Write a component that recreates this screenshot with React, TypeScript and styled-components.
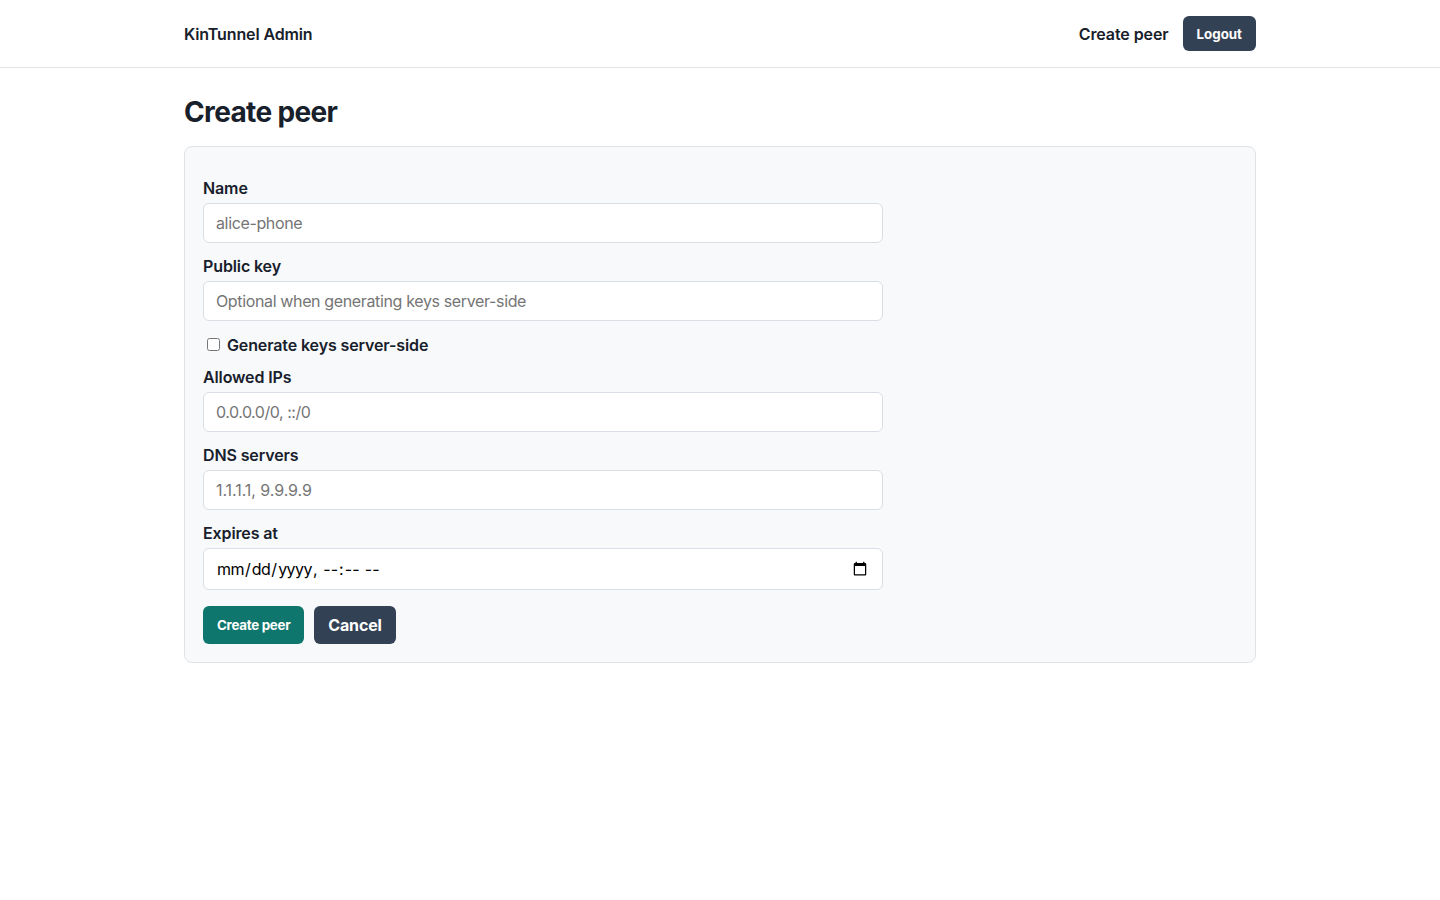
import * as React from "react";
import styled, { createGlobalStyle, css } from "styled-components";

const GlobalStyle = createGlobalStyle`
  html, body {
    margin: 0;
    padding: 0;
    background: #fff;
    color: #17202b;
    font-family: Inter, "Liberation Sans", sans-serif;
    font-size: 16px;
  }
  * {
    box-sizing: border-box;
  }
`;

const Nav = styled.nav`
  height: 68px;
  border-bottom: 1px solid #dfe3e8;
  background: #fff;
`;

const Container = styled.div`
  width: 1072px;
  margin: 0 auto;
`;

const NavInner = styled(Container)`
  height: 67px;
  display: flex;
  align-items: center;
  justify-content: space-between;
`;

const Brand = styled.a`
  font-size: 16px;
  font-weight: 600;
  letter-spacing: -0.13px;
  color: #17202b;
  text-decoration: none;
`;

const NavLinks = styled.div`
  display: flex;
  align-items: center;
  gap: 14px;
`;

const NavLink = styled.a`
  font-size: 16px;
  font-weight: 600;
  letter-spacing: -0.1px;
  color: #17202b;
  text-decoration: none;
`;

const Button = styled.button<{ $tone?: "primary" | "dark"; $small?: boolean }>`
  height: ${(p) => (p.$small ? "35px" : "38px")};
  padding: 0 14px;
  border: 0;
  border-radius: 6px;
  background: ${(p) => (p.$tone === "primary" ? "#0f766e" : "#334155")};
  color: #fff;
  font-family: inherit;
  font-size: 13.33px;
  font-weight: 700;
  letter-spacing: ${(p) => (p.$small ? "0" : "-0.27px")};
  cursor: pointer;
`;

const LinkButton = styled(Button).attrs({ as: "a" })`
  display: inline-flex;
  align-items: center;
  font-size: 16px;
  font-weight: 700;
  letter-spacing: -0.18px;
  text-decoration: none;
`;

const Title = styled.h1`
  margin: 27px 0 17px;
  font-size: 28px;
  line-height: 34px;
  font-weight: 700;
  letter-spacing: -0.64px;
  color: #17202b;
`;

const Card = styled.form`
  padding: 18px;
  border: 1px solid #dfe3e8;
  border-radius: 8px;
  background: #f7f9fb;
`;

const Label = styled.label`
  display: block;
  margin: 12px 0 6px;
  height: 20px;
  line-height: 22px;
  font-size: 16px;
  font-weight: 600;
  letter-spacing: -0.12px;
`;

const dateFields = css`
  letter-spacing: 0.08px;
  &::-webkit-datetime-edit-month-field,
  &::-webkit-datetime-edit-day-field,
  &::-webkit-datetime-edit-year-field {
    letter-spacing: -0.55px;
  }
`;

const Input = styled.input<{ $date?: boolean; $spacing?: number }>`
  display: block;
  width: 680px;
  height: ${(p) => (p.$date ? "42px" : "40px")};
  padding: 0 12px;
  border: 1px solid #d9dee5;
  border-radius: 6px;
  background: #fff;
  color: #000;
  font-family: inherit;
  font-size: 16px;
  letter-spacing: ${(p) => p.$spacing ?? -0.36}px;
  ${(p) => p.$date && dateFields}
  &::placeholder {
    color: #757575;
  }
`;

const CheckRow = styled.label`
  display: flex;
  align-items: center;
  height: 21px;
  margin-top: 12px;
  padding-top: 2px;
  font-size: 16px;
  font-weight: 600;
  letter-spacing: -0.12px;
`;

const Check = styled.input`
  width: 13px;
  height: 13px;
  margin: 0 7px 0 4px;
`;

const Actions = styled.div`
  display: flex;
  gap: 10px;
  margin-top: 16px;
`;

const App = () => {
  return (
    <>
      <GlobalStyle />
      <Nav>
        <NavInner>
          <Brand href="#">KinTunnel Admin</Brand>
          <NavLinks>
            <NavLink href="#">Create peer</NavLink>
            <Button $small type="button">
              Logout
            </Button>
          </NavLinks>
        </NavInner>
      </Nav>
      <Container>
        <Title>Create peer</Title>
        <Card onSubmit={(e) => e.preventDefault()}>
          <Label htmlFor="name">Name</Label>
          <Input id="name" placeholder="alice-phone" />
          <Label htmlFor="key">Public key</Label>
          <Input id="key" placeholder="Optional when generating keys server-side" />
          <CheckRow>
            <Check type="checkbox" />
            Generate keys server-side
          </CheckRow>
          <Label htmlFor="ips">Allowed IPs</Label>
          <Input id="ips" placeholder="0.0.0.0/0, ::/0" $spacing={-0.47} />
          <Label htmlFor="dns">DNS servers</Label>
          <Input id="dns" placeholder="1.1.1.1, 9.9.9.9" $spacing={-0.06} />
          <Label htmlFor="expires">Expires at</Label>
          <Input id="expires" type="datetime-local" $date />
          <Actions>
            <Button $tone="primary" type="submit">
              Create peer
            </Button>
            <LinkButton href="#">Cancel</LinkButton>
          </Actions>
        </Card>
      </Container>
    </>
  );
};

export default App;
